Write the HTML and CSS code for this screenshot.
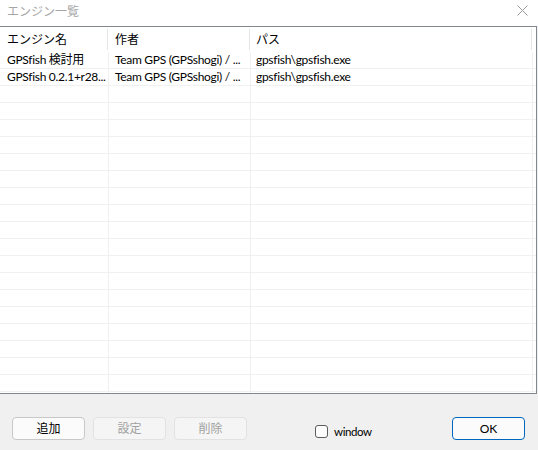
FILE: index.html
```html
<!DOCTYPE html>
<html lang="ja">
<head>
<meta charset="utf-8">
<title>エンジン一覧</title>
<link rel="stylesheet" href="styles.css">
</head>
<body>
<div class="window">
  <div class="titlebar">
    <span class="title">エンジン一覧</span>
    <svg class="close" width="11" height="11" viewBox="0 0 11 11"><path d="M0.5 0.5 L10.5 10.5 M10.5 0.5 L0.5 10.5" stroke="#9a9a9a" stroke-width="1" fill="none"/></svg>
  </div>
  <div class="list">
    <div class="header">
      <div class="hcell c1">エンジン名</div>
      <div class="hcell c2">作者</div>
      <div class="hcell c3">パス</div>
    </div>
    <div class="rows">
      <div class="row"><div class="cell c1">GPSfish 検討用</div><div class="cell c2">Team GPS (GPSshogi) / ...</div><div class="cell c3">gpsfish\gpsfish.exe</div></div>
      <div class="row"><div class="cell c1">GPSfish 0.2.1+r28...</div><div class="cell c2">Team GPS (GPSshogi) / ...</div><div class="cell c3">gpsfish\gpsfish.exe</div></div>
      <div class="row"><div class="cell c1"></div><div class="cell c2"></div><div class="cell c3"></div></div>
      <div class="row"><div class="cell c1"></div><div class="cell c2"></div><div class="cell c3"></div></div>
      <div class="row"><div class="cell c1"></div><div class="cell c2"></div><div class="cell c3"></div></div>
      <div class="row"><div class="cell c1"></div><div class="cell c2"></div><div class="cell c3"></div></div>
      <div class="row"><div class="cell c1"></div><div class="cell c2"></div><div class="cell c3"></div></div>
      <div class="row"><div class="cell c1"></div><div class="cell c2"></div><div class="cell c3"></div></div>
      <div class="row"><div class="cell c1"></div><div class="cell c2"></div><div class="cell c3"></div></div>
      <div class="row"><div class="cell c1"></div><div class="cell c2"></div><div class="cell c3"></div></div>
      <div class="row"><div class="cell c1"></div><div class="cell c2"></div><div class="cell c3"></div></div>
      <div class="row"><div class="cell c1"></div><div class="cell c2"></div><div class="cell c3"></div></div>
      <div class="row"><div class="cell c1"></div><div class="cell c2"></div><div class="cell c3"></div></div>
      <div class="row"><div class="cell c1"></div><div class="cell c2"></div><div class="cell c3"></div></div>
      <div class="row"><div class="cell c1"></div><div class="cell c2"></div><div class="cell c3"></div></div>
      <div class="row"><div class="cell c1"></div><div class="cell c2"></div><div class="cell c3"></div></div>
      <div class="row"><div class="cell c1"></div><div class="cell c2"></div><div class="cell c3"></div></div>
      <div class="row"><div class="cell c1"></div><div class="cell c2"></div><div class="cell c3"></div></div>
      <div class="row"><div class="cell c1"></div><div class="cell c2"></div><div class="cell c3"></div></div>
      <div class="row"><div class="cell c1"></div><div class="cell c2"></div><div class="cell c3"></div></div>
      <div class="row"><div class="cell c1"></div><div class="cell c2"></div><div class="cell c3"></div></div>
    </div>
  </div>
  <div class="footer">
    <div class="btn">追加</div>
    <div class="btn disabled">設定</div>
    <div class="btn disabled">削除</div>
    <label class="check"><span class="box"></span><span class="check-label">window</span></label>
    <div class="btn primary">OK</div>
  </div>
</div>
</body>
</html>
```
FILE: styles.css
```css
* { box-sizing: border-box; }
html, body { margin: 0; padding: 0; }
body {
  width: 538px;
  height: 450px;
  background: #f0f0f0;
  font-family: "Lato", "Noto Sans CJK JP", sans-serif;
  font-size: 12px;
  font-variant-ligatures: none;
  color: #000;
  overflow: hidden;
}
.window {
  display: flex;
  flex-direction: column;
  height: 450px;
}
.titlebar {
  height: 26px;
  background: #fff;
  display: flex;
  align-items: center;
  justify-content: space-between;
  padding: 0 10px 0 7px;
}
.title {
  color: #a6a6a6;
  font-size: 12px;
  line-height: 22px;
  margin-top: -2px;
}
.close { display: block; margin-top: -5px; }
.list {
  width: 537px;
  height: 368px;
  background: #fff;
  border-top: 1px solid #828790;
  border-right: 1px solid #828790;
  border-bottom: 1px solid #828790;
  overflow: hidden;
}
.header {
  display: grid;
  grid-template-columns: 108px 142px 282px;
  height: 25px;
}
.hcell {
  padding-left: 7px;
  border-right: 1px solid #e5e5e5;
  margin: 2px 0 2px;
  line-height: 21px;
  white-space: nowrap;
}
.hcell.c2 { padding-left: 7px; }
.hcell.c3 { padding-left: 6px; }
.rows { display: flex; flex-direction: column; }
.row {
  display: grid;
  grid-template-columns: 109px 142px 282px;
  height: 17px;
  border-bottom: 1px solid #f0f0f0;
}
.cell {
  border-right: 1px solid #f0f0f0;
  padding-left: 7px;
  line-height: 16px;
  letter-spacing: -0.3px;
  white-space: nowrap;
  overflow: hidden;
}
.cell.c2 { padding-left: 6px; }
.cell.c3 { padding-left: 5px; }
.footer {
  flex: 1;
  display: flex;
  align-items: flex-start;
  padding: 23px 13px 0 12px;
  gap: 8px;
}
.btn {
  width: 73px;
  height: 23px;
  border: 1px solid #c8c8c8;
  border-radius: 4px;
  background: #fbfbfb;
  text-align: center;
  line-height: 21px;
  font-size: 12px;
}
.btn.disabled {
  color: #a0a0a0;
  border-color: #e2e2e2;
  background: #f5f5f5;
}
.btn.primary {
  border-color: #0067c0;
  margin-left: auto;
}
.check {
  display: flex;
  align-items: center;
  gap: 6px;
  margin-left: 60px;
  margin-top: 8px;
  height: 13px;
}
.box {
  width: 13px;
  height: 13px;
  border: 1px solid #5c5c5c;
  border-radius: 3px;
  background: #fcfcfc;
}
.check-label { font-size: 11.5px; line-height: 13px; letter-spacing: -0.4px; }
```
